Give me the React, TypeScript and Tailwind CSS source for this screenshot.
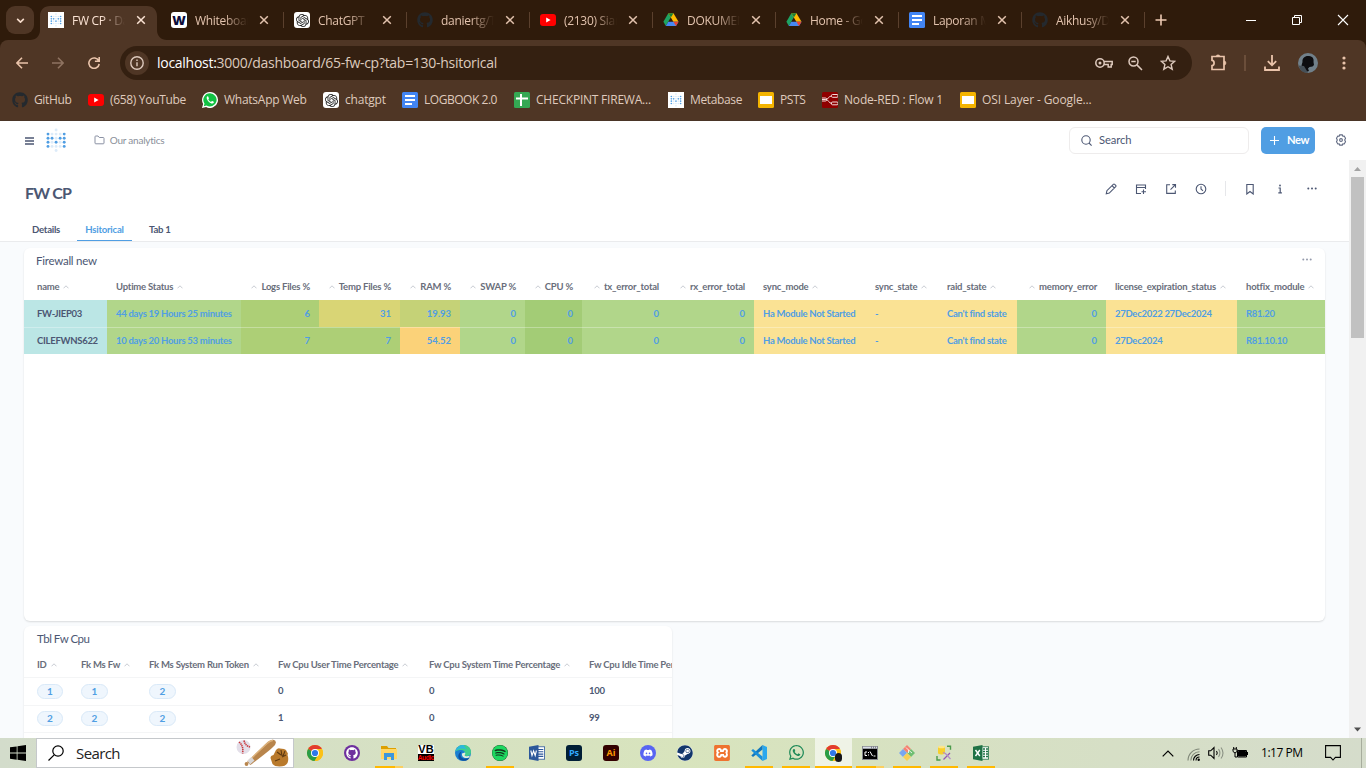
import type { ReactNode } from 'react';
import { FaGithub, FaWhatsapp, FaDiscord, FaSteam, FaSpotify } from 'react-icons/fa';
import { SiOpenai, SiXampp } from 'react-icons/si';

/* ---------- brand marks ---------- */

const METABASE_DARK = new Set(['0-1', '0-2', '0-3', '0-4', '1-2', '2-3', '3-2', '4-1', '4-2', '4-3', '4-4']);

function MetabaseDots({ className }: { className: string }) {
  const dots: ReactNode[] = [];
  for (let c = 0; c < 5; c++) {
    for (let r = 0; r < 6; r++) {
      if ((r === 0 || r === 5) && c !== 2) continue;
      const dark = METABASE_DARK.has(`${c}-${r}`);
      dots.push(<circle key={`${c}-${r}`} cx={2 + c * 4.05} cy={2 + r * 4.1} r={1.45} fill={dark ? '#509ee3' : '#dcebf9'} />);
    }
  }
  return (
    <svg viewBox="0 0 20.3 24.5" className={className}>
      {dots}
    </svg>
  );
}

function MetabaseTile() {
  return (
    <span className="flex size-4 items-center justify-center bg-white">
      <MetabaseDots className="h-[14px] w-3" />
    </span>
  );
}

function OpenAiTile() {
  return (
    <span className="flex size-4 items-center justify-center rounded-[3px] bg-white">
      <SiOpenai className="size-[13px] text-[#222]" />
    </span>
  );
}

function YoutubeTile() {
  return (
    <svg viewBox="0 0 16 16" className="size-4">
      <rect x="0" y="2" width="16" height="12" rx="3" fill="#f00" />
      <path d="M6.2 5.5v5l4.4-2.5z" fill="#fff" />
    </svg>
  );
}

function DriveMark() {
  return (
    <svg viewBox="0 0 16 16" className="size-4">
      <path d="M5.3 1.2 0.4 9.8l2.4 4.2L8 5.1z" fill="#1ea362" />
      <path d="M5.3 1.2h5.2l5 8.6h-5.1z" fill="#ffba00" />
      <path d="M5.3 1.2h5.2L8 5.3z" fill="#188038" />
      <path d="M5.3 9.8h10.2l-2.5 4.2H2.8z" fill="#4688f4" />
      <path d="M10.4 9.8h5.1L13 14z" fill="#ea4335" />
    </svg>
  );
}

function DocsTile() {
  return (
    <svg viewBox="0 0 16 16" className="size-4">
      <rect width="16" height="16" rx="1.5" fill="#4285f4" />
      <path d="M3 4h10M3 8h10M3 12h7" stroke="#fff" strokeWidth="1.8" />
    </svg>
  );
}

function SheetsTile() {
  return (
    <svg viewBox="0 0 16 16" className="size-4">
      <rect width="16" height="16" rx="1.5" fill="#34a853" />
      <path d="M2 6.5h12M7 2v12" stroke="#fff" strokeWidth="2" />
    </svg>
  );
}

function SlidesTile() {
  return (
    <svg viewBox="0 0 16 16" className="size-4">
      <rect width="16" height="16" rx="1.5" fill="#f4b400" />
      <rect x="2" y="4" width="12" height="8" fill="#fff" />
    </svg>
  );
}

function NodeRedTile() {
  return (
    <svg viewBox="0 0 16 16" className="size-4">
      <rect width="16" height="16" rx="1.5" fill="#8f0000" />
      <g fill="none" stroke="#f3dcdc" strokeWidth="1">
        <path d="M0 7.500h3.500C7 7.500 6 4 9.500 4M3.500 7.500C7 7.500 6.500 11.500 10 11.500" />
        <rect x="9.500" y="2.500" width="6.500" height="2.800" rx="1" />
        <rect x="9.500" y="10" width="6.500" height="2.800" rx="1" />
        <rect x="-1" y="6" width="5.500" height="3" rx="1" />
      </g>
    </svg>
  );
}

function WhatsappBadge() {
  return (
    <svg viewBox="0 0 16 16" className="size-4">
      <path d="M8 0a8 8 0 0 0-6.9 12L0 16l4.1-1A8 8 0 1 0 8 0z" fill="#fff" />
      <path d="M8 1.3a6.6 6.6 0 0 0-5.5 10.3l-.7 2.6 2.7-.7A6.6 6.6 0 1 0 8 1.3z" fill="#12c143" />
      <path d="M5.5 4.3c-.8.5-1 1.500-.6 2.600.9 2.200 2.400 3.700 4.600 4.500 1.100.3 2-.1 2.400-1.100.1-.3 0-.5-.2-.6l-1.400-.7c-.3-.1-.5 0-.7.3l-.5.6c-1.300-.5-2.200-1.400-2.800-2.500l.5-.7c.1-.2.1-.4 0-.6l-.6-1.500c-.1-.3-.4-.4-.7-.3z" fill="#fff" />
    </svg>
  );
}

function ChromeMark({ className = 'size-4' }: { className?: string }) {
  return (
    <svg viewBox="0 0 16 16" className={className}>
      <circle cx="8" cy="8" r="8" fill="#fbc116" />
      <path d="M8 8 1.070 4A8 8 0 0 1 14.930 4z" fill="#e33b2e" />
      <path d="M8 8 1.070 4A8 8 0 0 0 7.500 16l3.700-6.200z" fill="#2a9d48" />
      <path d="M8 4h6.930A8 8 0 0 1 8 16l3.460-6z" fill="#fbc116" />
      <circle cx="8" cy="8" r="4" fill="#fff" />
      <circle cx="8" cy="8" r="3.1" fill="#2f78ea" />
    </svg>
  );
}

/* ---------- browser frame ---------- */

const tabs: { icon: ReactNode; title: string }[] = [
  { icon: <MetabaseTile />, title: 'FW CP · Dashboard' },
  {
    icon: (
      <span className="flex size-4 items-center justify-center rounded-[3px] bg-white font-['Noto_Sans',sans-serif] text-[13px] leading-none font-black text-[#0b0b3b]">
        W
      </span>
    ),
    title: 'Whiteboard',
  },
  { icon: <OpenAiTile />, title: 'ChatGPT' },
  { icon: <FaGithub className="size-4 text-[#24292e]" />, title: 'daniertg/Tugas' },
  { icon: <YoutubeTile />, title: '(2130) Siaran' },
  { icon: <DriveMark />, title: 'DOKUMEN' },
  { icon: <DriveMark />, title: 'Home - Google' },
  { icon: <DocsTile />, title: 'Laporan Magang' },
  { icon: <FaGithub className="size-4 text-[#24292e]" />, title: 'Aikhusy/Dash' },
];

function CloseX() {
  return (
    <svg viewBox="0 0 10 10" className="size-[10px] shrink-0" fill="none" stroke="currentColor" strokeWidth="1.5">
      <path d="M1.2 1.2l7.600 7.600M8.800 1.200l-7.600 7.600" />
    </svg>
  );
}

function TabStrip() {
  return (
    <div className="flex h-10 bg-[#2f1b0b]">
      <div className="flex w-10 shrink-0 pt-1.5 pl-1.5">
        <span className="flex size-7 items-center justify-center rounded-[9px] bg-[#4f3625] text-[#f6dccb]">
          <svg viewBox="0 0 10 6" className="h-[5px] w-[9px]" fill="none" stroke="currentColor" strokeWidth="1.900">
            <path d="M1 1l4 4 4-4" />
          </svg>
        </span>
      </div>
      {tabs.map((t, i) => (
        <div key={t.title} className="relative flex w-[123px] shrink-0 pt-1.5">
          {i === 0 && (
            <svg viewBox="0 0 137 34" className="absolute top-1.5 -left-[10px] h-[34px] w-[137px]">
              <path d="M0 34c6 0 10-4 10-10V10C10 4 14 0 20 0h97c6 0 10 4 10 10v14c0 6 4 10 10 10z" fill="#4f3625" />
            </svg>
          )}
          <div className={`relative flex h-7 w-[117px] items-center pl-2 ${i === 0 ? 'text-[#fbe3d4]' : 'text-[#e3c3ae]'}`}>
            {t.icon}
            <span className="ml-2 w-[53px] overflow-hidden mask-r-from-55% mask-r-to-100% pt-px font-['Open_Sans',sans-serif] text-[12px] tracking-[-0.3px] whitespace-nowrap">
              {t.title}
            </span>
            <span className="ml-[11px] flex">
              <CloseX />
            </span>
          </div>
          {i > 0 && <span className="mt-1.5 ml-[3px] h-4 w-px bg-[#5b402d]" />}
        </div>
      ))}
      <div className="flex w-[60px] items-center pl-2 text-[#eecab3]">
        <svg viewBox="0 0 12 12" className="size-3" stroke="currentColor" strokeWidth="1.6">
          <path d="M6 0.500v11M0.500 6h11" />
        </svg>
      </div>
      <div className="ml-auto flex items-center text-white">
        <svg viewBox="0 0 46 40" className="h-10 w-[46px]" stroke="currentColor">
          <path d="M18 20.500h10" />
        </svg>
        <svg viewBox="0 0 46 40" className="h-10 w-[46px]" fill="none" stroke="currentColor">
          <path d="M18.500 17.500h7v7h-7zM20.500 17.500v-2h7v7h-2" />
        </svg>
        <svg viewBox="0 0 46 40" className="h-10 w-[46px]" fill="none" stroke="currentColor" strokeWidth="1.1">
          <path d="M18 15l10 10M28 15l-10 10" />
        </svg>
      </div>
    </div>
  );
}

function Toolbar() {
  return (
    <div className="flex h-[46px] items-center">
      <div className="flex w-[120px] shrink-0 items-center pl-4 text-[#eac4ab]">
        <svg viewBox="0 0 12 12" className="size-3" fill="none" stroke="currentColor" strokeWidth="1.6">
          <path d="M12 6H1M6 0.800 0.900 6 6 11.200" />
        </svg>
        <svg viewBox="0 0 12 12" className="ml-6 size-3 text-[#8f7361]" fill="none" stroke="currentColor" strokeWidth="1.6">
          <path d="M0 6h11M6 0.800 11.100 6 6 11.200" />
        </svg>
        <svg viewBox="0 0 12 12" className="ml-6 size-3" fill="none" stroke="currentColor" strokeWidth="1.6">
          <path d="M10.700 3.800A5.200 5.200 0 1 0 11.200 7M11.200 0v4.300H6.900" />
        </svg>
      </div>
      <div className="flex h-[34px] w-[1072px] shrink-0 items-center rounded-full bg-[#342011] pl-[5px] text-[#ddc9bd]">
        <span className="flex size-6 items-center justify-center rounded-full bg-[#4f3625]">
          <svg viewBox="0 0 14 14" className="size-[14px]" fill="none" stroke="currentColor" strokeWidth="1.400">
            <circle cx="7" cy="7" r="6.200" />
            <path d="M7 6.200v4M7 3.500v1.400" />
          </svg>
        </span>
        <span className="ml-2 pb-px font-['Open_Sans',sans-serif] text-[14px] tracking-[-0.28px] whitespace-nowrap text-[#ddcabd]">
          <span className="text-white">localhost:</span>3000/dashboard/65-fw-cp?tab=130-hsitorical
        </span>
        <svg viewBox="0 0 18 12" className="ml-auto h-3 w-[18px]" fill="none" stroke="currentColor" strokeWidth="1.500">
          <circle cx="5" cy="6" r="4.200" />
          <circle cx="5" cy="6" r="1.500" fill="currentColor" stroke="none" />
          <path d="M9 4.500h8.200v3h-1v2.500h-3V7.500H9" />
        </svg>
        <svg viewBox="0 0 15 15" className="ml-[15px] size-[15px]" fill="none" stroke="currentColor" strokeWidth="1.500">
          <circle cx="5.500" cy="5.500" r="4.500" />
          <path d="M8.900 8.900 14 14M3.300 5.500h4.400" />
        </svg>
        <svg viewBox="0 0 16 16" className="mr-4 ml-[17px] size-4" fill="none" stroke="currentColor" strokeWidth="1.400">
          <path d="M8 1.500l1.900 4.400 4.800.4-3.600 3.200 1.100 4.700L8 11.700l-4.200 2.500 1.100-4.700L1.300 6.300l4.800-.4z" />
        </svg>
      </div>
      <div className="flex flex-1 items-center pl-[18px] text-[#eac4ab]">
        <svg viewBox="0 0 18 18" className="size-[18px]" fill="none" stroke="currentColor" strokeWidth="1.700">
          <path d="M2 2.500h12v13H2v-3.800c2.800-.2 2.800-5.200 0-5.400z" />
          <path d="M6 2.500a2 1.700 0 0 1 4 0zM14 7a2 2 0 0 1 0 4z" fill="currentColor" strokeWidth="0.500" />
        </svg>
        <span className="ml-4 h-4 w-[2px] bg-[#6b4e3a]" />
        <svg viewBox="0 0 16 16" className="ml-[18px] size-4" fill="none" stroke="currentColor" strokeWidth="1.800">
          <path d="M8 0v10M3.800 6.200 8 10.300l4.200-4.100M1 11.500V15h14v-3.500" />
        </svg>
        <svg viewBox="0 0 20 20" className="ml-[18px] size-5">
          <circle cx="10" cy="10" r="10" fill="#71808a" />
          <path d="M4.500 9c-.5-4 2.500-6.500 6.500-6s5 3 4.500 6l.5 3-1.500 1.500-3 .5-1.500 1.500 1 2.500-3 1-4.500-6.500z" fill="#0d0d10" />
          <path d="M0.800 12.500 6 13l4 6.800C5 20.300 1.500 17 .8 12.500z" fill="#465058" />
        </svg>
        <svg viewBox="0 0 4 14" className="ml-6 h-[14px] w-1" fill="currentColor">
          <circle cx="2" cy="2" r="1.600" />
          <circle cx="2" cy="7" r="1.600" />
          <circle cx="2" cy="12" r="1.600" />
        </svg>
      </div>
    </div>
  );
}

const bookmarks: { icon: ReactNode; label: string; width: string; tracking: string }[] = [
  { icon: <FaGithub className="size-4 text-[#24292e]" />, label: 'GitHub', width: 'w-[76px]', tracking: 'tracking-[-0.36px]' },
  { icon: <YoutubeTile />, label: '(658) YouTube', width: 'w-[114px]', tracking: 'tracking-[-0.32px]' },
  { icon: <WhatsappBadge />, label: 'WhatsApp Web', width: 'w-[121px]', tracking: 'tracking-[-0.26px]' },
  { icon: <OpenAiTile />, label: 'chatgpt', width: 'w-[79px]', tracking: 'tracking-[-0.2px]' },
  { icon: <DocsTile />, label: 'LOGBOOK 2.0', width: 'w-[112px]', tracking: 'tracking-[-0.46px]' },
  { icon: <SheetsTile />, label: 'CHECKPINT FIREWA...', width: 'w-[154px]', tracking: 'tracking-[-0.22px]' },
  { icon: <MetabaseTile />, label: 'Metabase', width: 'w-[90px]', tracking: 'tracking-[-0.36px]' },
  { icon: <SlidesTile />, label: 'PSTS', width: 'w-16', tracking: 'tracking-[-0.36px]' },
  { icon: <NodeRedTile />, label: 'Node-RED : Flow 1', width: 'w-[138px]', tracking: 'tracking-[-0.18px]' },
  { icon: <SlidesTile />, label: 'OSI Layer - Google...', width: 'w-[150px]', tracking: 'tracking-[-0.11px]' },
];

function BookmarkBar() {
  return (
    <div className="flex h-[35px] items-center border-b border-[#4a3527] pb-[6px] pl-3">
      {bookmarks.map((b) => (
        <div key={b.label} className={`flex shrink-0 items-center gap-1.5 ${b.width}`}>
          {b.icon}
          <span className={`font-['Open_Sans',sans-serif] text-[12px] whitespace-nowrap text-[#dfcabd] ${b.tracking}`}>{b.label}</span>
        </div>
      ))}
    </div>
  );
}

/* ---------- dashboard ---------- */

function Caret() {
  return (
    <svg viewBox="0 0 6 4" className="mb-px h-1 w-1.5 shrink-0 text-[#b9bec6]" fill="none" stroke="currentColor" strokeWidth="0.800">
      <path d="M0.500 3.300 3 0.800l2.500 2.500" />
    </svg>
  );
}

function Dots({ className }: { className: string }) {
  return (
    <svg viewBox="0 0 10 3" className={className} fill="currentColor">
      <circle cx="1.300" cy="1.500" r="1" />
      <circle cx="5" cy="1.500" r="1" />
      <circle cx="8.700" cy="1.500" r="1" />
    </svg>
  );
}

function AppHeader() {
  return (
    <div className="flex h-[39px] shrink-0 items-center bg-white">
      <svg viewBox="0 0 9 8" className="ml-[25px] h-2 w-[9px] text-[#4c5773]" stroke="currentColor" strokeWidth="1.300">
        <path d="M0 1h9M0 4h9M0 7h9" />
      </svg>
      <MetabaseDots className="ml-3 h-[24.500px] w-[20.300px]" />
      <svg viewBox="0 0 11 10" className="mb-px ml-7 h-[10px] w-[11px] text-[#8a91a3]" fill="none" stroke="currentColor" strokeWidth="1">
        <path d="M1 8V1.800q0-.8.8-.8h2.200l1.300 1.500h3.900q.8 0 .8.800V8q0 .8-.8.800H1.800Q1 8.800 1 8z" />
      </svg>
      <span className="ml-[4.500px] text-[10px] tracking-[-0.23px] text-[#8a8f99]">Our analytics</span>
      <div className="ml-auto flex h-[27px] w-[180px] items-center rounded-md border border-[#eeecec] pl-[11px]">
        <svg viewBox="0 0 11 11" className="size-[11px] text-[#4c5773]" fill="none" stroke="currentColor" strokeWidth="1.100">
          <circle cx="5" cy="5" r="4.200" />
          <path d="M8 8l2.600 2.600" />
        </svg>
        <span className="ml-[7px] text-[11.200px] tracking-[-0.1px] text-[#4c5773]">Search</span>
      </div>
      <div className="ml-3 flex h-[27px] w-[54px] items-center rounded-[5px] bg-[#509ee3] text-white">
        <svg viewBox="0 0 9 9" className="ml-[9px] size-[9px]" stroke="currentColor" strokeWidth="1.100">
          <path d="M4.500 0v9M0 4.500h9" />
        </svg>
        <span className="ml-2 text-[11.200px] font-bold tracking-[-0.4px]">New</span>
      </div>
      <svg viewBox="0 0 12 12" className="mr-[19px] mb-px ml-5 size-3 text-[#5f6880]" fill="none" stroke="currentColor" strokeWidth="1.100">
        <path d="M4.700 0.900h2.600l.5 1.300 1.400-.2 1.300 2.200L9.700 6l.8 1.800-1.300 2.200-1.400-.2-.5 1.300H4.700l-.5-1.300-1.400.2-1.300-2.200L2.300 6l-.8-1.800L2.800 2l1.400.2z" />
        <circle cx="6" cy="6" r="1.400" />
      </svg>
    </div>
  );
}

function DashActions() {
  return (
    <div className="flex items-center text-[#4c5773]">
      <svg viewBox="0 0 12 12" className="size-3" fill="none" stroke="currentColor" strokeWidth="1.100">
        <path d="M1.300 10.700l.6-3L8.300 1.300q.7-.6 1.400 0l1 1q.6.7 0 1.400L4.300 10.100zM7 2.600 9.400 5" />
      </svg>
      <svg viewBox="0 0 12 12" className="ml-[18px] size-3" fill="none" stroke="currentColor" strokeWidth="1.100">
        <path d="M6 10.500H1.500v-8.500h9v4M1 4.500h10M8.500 6.500v4.500M6.500 8.800h4.500" />
      </svg>
      <svg viewBox="0 0 12 12" className="ml-[18px] size-3" fill="none" stroke="currentColor" strokeWidth="1.100">
        <path d="M5 1.800H1.700v8.600h8.600V7.500M7.300 1.600h3.200v3.200M10.500 1.600 5.500 6.600" />
      </svg>
      <svg viewBox="0 0 12 12" className="ml-[18px] size-3" fill="none" stroke="currentColor" strokeWidth="1.100">
        <circle cx="6" cy="6" r="4.800" />
        <path d="M6 3.200V6l2 1.800" />
      </svg>
      <span className="ml-[18px] h-[15px] w-px bg-[#e6e7ea]" />
      <svg viewBox="0 0 12 12" className="ml-[18px] size-3" fill="none" stroke="currentColor" strokeWidth="1.100">
        <path d="M2.800 1.500h6.400V11L6 8.500 2.800 11z" />
      </svg>
      <svg viewBox="0 0 12 12" className="ml-[18px] size-3" fill="none" stroke="currentColor" strokeWidth="1.200">
        <path d="M4.500 5h1.700v4.500M4.300 9.800h3.600" />
        <circle cx="6" cy="2.500" r="0.900" fill="currentColor" stroke="none" />
      </svg>
      <Dots className="ml-[21px] h-[3px] w-[10px]" />
    </div>
  );
}

const GREEN = 'bg-[#b1d68a]';
const YELLOW = 'bg-[#fae294]';
const MOSS = 'bg-[#adcf76]';

interface Column {
  name: string;
  width: string;
  right?: boolean;
  cells: [string, string];
  fills: [string, string];
}

const columns: Column[] = [
  { name: 'name', width: 'w-[83px]', cells: ['FW-JIEP03', 'CILEFWNS622'], fills: ['bg-[#bbe6e5]', 'bg-[#bbe6e5]'] },
  { name: 'Uptime Status', width: 'w-[134px]', cells: ['44 days 19 Hours 25 minutes', '10 days 20 Hours 53 minutes'], fills: [GREEN, GREEN] },
  { name: 'Logs Files %', width: 'w-[78px]', right: true, cells: ['6', '7'], fills: [MOSS, MOSS] },
  { name: 'Temp Files %', width: 'w-[81px]', right: true, cells: ['31', '7'], fills: ['bg-[#d9d575]', MOSS] },
  { name: 'RAM %', width: 'w-[60px]', right: true, cells: ['19.93', '54.52'], fills: ['bg-[#c5d277]', 'bg-[#fbd279]'] },
  { name: 'SWAP %', width: 'w-[65px]', right: true, cells: ['0', '0'], fills: [GREEN, GREEN] },
  { name: 'CPU %', width: 'w-[57px]', right: true, cells: ['0', '0'], fills: ['bg-[#a3cc76]', 'bg-[#a3cc76]'] },
  { name: 'tx_error_total', width: 'w-[86px]', right: true, cells: ['0', '0'], fills: [GREEN, GREEN] },
  { name: 'rx_error_total', width: 'w-[86px]', right: true, cells: ['0', '0'], fills: [GREEN, GREEN] },
  { name: 'sync_mode', width: 'w-[112px]', cells: ['Ha Module Not Started', 'Ha Module Not Started'], fills: [YELLOW, YELLOW] },
  { name: 'sync_state', width: 'w-[72px]', cells: ['-', '-'], fills: [YELLOW, YELLOW] },
  { name: 'raid_state', width: 'w-[79px]', cells: ["Can't find state", "Can't find state"], fills: [YELLOW, YELLOW] },
  { name: 'memory_error', width: 'w-[89px]', right: true, cells: ['0', '0'], fills: [GREEN, GREEN] },
  { name: 'license_expiration_status', width: 'w-[131px]', cells: ['27Dec2022 27Dec2024', '27Dec2024'], fills: [YELLOW, YELLOW] },
  { name: 'hotfix_module', width: 'w-[88px]', cells: ['R81.20', 'R81.10.10'], fills: [GREEN, GREEN] },
];

function FirewallCard() {
  return (
    <section className="h-[373px] w-[1301px] shrink-0 overflow-hidden rounded-md bg-white shadow-[0_1px_2px_rgba(0,0,0,0.13)]">
      <div className="flex h-[26px] items-center justify-between pr-[13px] pl-3">
        <h2 className="text-[11.500px] font-normal tracking-[-0.25px] text-[#4c5773]">Firewall new</h2>
        <Dots className="mb-[3px] h-[3px] w-[10px] text-[#949aab]" />
      </div>
      <div className="flex h-[26px] items-center">
        {columns.map((c, i) => (
          <div
            key={c.name}
            className={`flex shrink-0 items-center gap-1 text-[9.500px] font-bold tracking-[-0.21px] whitespace-nowrap text-[#696e7b] ${c.width} ${
              i === 0 ? 'pl-[13px]' : 'px-[9px]'
            } ${c.right ? 'flex-row-reverse' : ''}`}
          >
            <span>{c.name}</span>
            <Caret />
          </div>
        ))}
      </div>
      {([0, 1] as const).map((r) => (
        <div key={r} className="flex h-[27px]">
          {columns.map((c, i) => (
            <div
              key={c.name}
              className={`flex shrink-0 items-center text-[9.500px] font-bold whitespace-nowrap ${c.width} ${c.fills[r]} ${
                i === 0 ? 'pl-[13px] text-[#4c5773]' : 'px-[9px] text-[#509ee3]'
              } ${c.right ? 'justify-end' : 'tracking-[-0.28px]'} ${r === 1 ? 'border-t border-white/30' : 'pt-px'}`}
            >
              {c.cells[r]}
            </div>
          ))}
        </div>
      ))}
    </section>
  );
}

const cpuColumns = [
  { name: 'ID', width: 'w-[44px]', cells: ['1', '2'], pill: 'w-[26px]' },
  { name: 'Fk Ms Fw', width: 'w-[68px]', cells: ['1', '2'], pill: 'w-[27px]' },
  { name: 'Fk Ms System Run Token', width: 'w-[129px]', cells: ['2', '2'], pill: 'w-[27px]' },
  { name: 'Fw Cpu User Time Percentage', width: 'w-[151px]', cells: ['0', '1'], pill: '' },
  { name: 'Fw Cpu System Time Percentage', width: 'w-[160px]', cells: ['0', '0'], pill: '' },
  { name: 'Fw Cpu Idle Time Percentage', width: 'w-[160px]', cells: ['100', '99'], pill: '' },
];

function CpuCard() {
  return (
    <section className="mt-[5px] h-[180px] w-[648px] shrink-0 overflow-hidden rounded-md bg-white shadow-[0_1px_2px_rgba(0,0,0,0.13)]">
      <div className="flex h-[26px] items-center pl-[13px]">
        <h2 className="text-[11.500px] font-normal tracking-[-0.5px] text-[#4c5773]">Tbl Fw Cpu</h2>
      </div>
      <div className="flex h-[26px] items-center border-b border-[#f4f5f6] pt-0.5 pl-[13px]">
        {cpuColumns.map((c) => (
          <div key={c.name} className={`flex shrink-0 items-center gap-1 text-[9.500px] font-bold tracking-[-0.23px] whitespace-nowrap text-[#696e7b] ${c.width}`}>
            <span>{c.name}</span>
            <Caret />
          </div>
        ))}
      </div>
      {[0, 1].map((r) => (
        <div key={r} className={`flex items-center border-b border-[#f4f5f6] pl-[13px] ${r === 0 ? 'h-7' : 'h-[27px] pb-px'}`}>
          {cpuColumns.map((c) => (
            <div key={c.name} className={`flex shrink-0 ${c.width}`}>
              {c.pill ? (
                <span className={`flex h-[15px] items-center justify-center rounded-full border border-[#d9e9f8] bg-[#eff6fd] text-[10px] font-bold text-[#509ee3] ${c.pill}`}>
                  {c.cells[r]}
                </span>
              ) : (
                <span className="text-[9.500px] font-bold tracking-[-0.2px] text-[#4c5773]">{c.cells[r]}</span>
              )}
            </div>
          ))}
        </div>
      ))}
    </section>
  );
}

function Dashboard() {
  return (
    <div className="flex min-h-0 flex-1 flex-col bg-white font-['Lato',sans-serif]">
      <AppHeader />
      <div className="flex min-h-0 flex-1">
        <div className="flex min-w-0 flex-1 flex-col overflow-hidden bg-[#f9fbfd]">
          <div className="flex h-[82px] shrink-0 flex-col border-b border-[#eaebed] bg-white">
            <div className="flex h-[58px] shrink-0 items-start justify-between pr-8 pl-[25px]">
              <h1 className="mt-[21px] text-[16px] leading-6 font-bold tracking-[-0.8px] text-[#4c5773]">FW CP</h1>
              <div className="mt-[21px]">
                <DashActions />
              </div>
            </div>
            <div className="flex h-[23px] text-[9.600px] font-bold tracking-[-0.25px]">
              <span className="ml-6 w-[53px] pl-2 leading-[23px] text-[#4c5773]">Details</span>
              <span className="flex h-[23px] w-[55px] justify-center border-b border-[#509ee3] leading-[23px] text-[#509ee3]">Hsitorical</span>
              <span className="ml-[17px] leading-[23px] text-[#4c5773]">Tab 1</span>
            </div>
          </div>
          <div className="flex min-h-0 flex-1 flex-col pt-1.5 pl-6">
            <FirewallCard />
            <CpuCard />
          </div>
        </div>
        <div className="flex w-[17px] shrink-0 flex-col items-center bg-[#f1f1f1]">
          <svg viewBox="0 0 17 17" className="size-[17px]" fill="#a3a3a3">
            <path d="M5 11l3.500-4 3.500 4z" />
          </svg>
          <span className="h-[161px] w-[13px] bg-[#c1c1c1]" />
          <svg viewBox="0 0 17 17" className="mt-auto size-[17px]" fill="#505050">
            <path d="M5 6.500l3.500 4 3.500-4z" />
          </svg>
        </div>
      </div>
    </div>
  );
}

/* ---------- taskbar ---------- */

function SquareMark({ bg, color, label }: { bg: string; color: string; label: string }) {
  return (
    <span className={`flex size-4 items-center justify-center rounded-[3px] font-['Open_Sans',sans-serif] text-[9px] font-bold ${bg} ${color}`}>{label}</span>
  );
}

type Running = 'none' | 'single' | 'stack' | 'active';

const taskbarApps: { id: string; icon: ReactNode; state: Running }[] = [
  { id: 'chrome', state: 'none', icon: <ChromeMark /> },
  {
    id: 'github-desktop',
    state: 'none',
    icon: (
      <span className="flex size-4 items-center justify-center rounded-full bg-[#6e2f9e]">
        <FaGithub className="size-3 text-white" />
      </span>
    ),
  },
  {
    id: 'explorer',
    state: 'stack',
    icon: (
      <svg viewBox="0 0 16 16" className="size-4">
        <path d="M0 1h6l1.500 2H15v4H0z" fill="#dda000" />
        <path d="M0 4h16v10H0z" fill="#ffd766" />
        <path d="M3 8h10v7h-3v-3H6v3H3z" fill="#3c97dd" />
      </svg>
    ),
  },
  {
    id: 'vb-audio',
    state: 'none',
    icon: (
      <span className="flex size-4 flex-col items-center overflow-hidden bg-white font-['Liberation_Sans',sans-serif]">
        <span className="text-[11px] leading-[9px] font-bold text-black">VB</span>
        <span className="flex h-[7px] w-4 justify-center bg-black text-[6.500px] leading-[7px] font-bold tracking-[-0.4px] text-[#f00]">Audio</span>
      </span>
    ),
  },
  {
    id: 'edge',
    state: 'none',
    icon: (
      <svg viewBox="0 0 16 16" className="size-4">
        <circle cx="8" cy="8" r="8" fill="#1b7fd1" />
        <path d="M0.300 6.500C1.500 2 5 0 8.500 0 13 0 16 3.300 16 7c0 2.500-2 4-4 4-1.700 0-2.600-.7-2.300-1.300C11 7.300 9 5 6 5c-2.500 0-4.500.5-5.700 1.500z" fill="#3fcf8b" />
        <path d="M0.300 6.500C1.500 2 5 0 8.500 0L12 5C7 2 3 4 .3 6.500z" fill="#2bb8dd" />
        <path d="M5.500 9c-.5 4 3 6 9 4-2 3-6 3.500-9 2C2 13 3 8 6.500 6.500z" fill="#0d4f9e" />
        <path d="M10 7.500c1 2-1 2.200 0 3.300 1.200.9 3.500.4 5 0l-1.500 2C9 14 6.500 11.500 7 8.500z" fill="#e3efd8" />
      </svg>
    ),
  },
  {
    id: 'spotify',
    state: 'single',
    icon: (
      <span className="flex size-4 rounded-full bg-[#12351d]">
        <FaSpotify className="size-4 text-[#1ed760]" />
      </span>
    ),
  },
  {
    id: 'word',
    state: 'none',
    icon: (
      <svg viewBox="0 0 16 16" className="size-4">
        <rect x="8" y="1.800" width="7.600" height="12.400" fill="#fff" stroke="#2b579a" strokeWidth="0.800" />
        <path d="M9 4.500h5.300M9 6.800h5.300M9 9.100h5.300M9 11.400h5.300" stroke="#2b579a" strokeWidth="1.100" />
        <path d="M0 1.800 9.500 0v16L0 14.200z" fill="#2b579a" />
        <path d="M1.800 5.500 3 10.500 4.600 6 6.200 10.500 7.400 5.500" fill="none" stroke="#fff" strokeWidth="1.100" />
      </svg>
    ),
  },
  { id: 'photoshop', state: 'none', icon: <SquareMark bg="bg-[#001e36]" color="text-[#31a8ff]" label="Ps" /> },
  { id: 'illustrator', state: 'none', icon: <SquareMark bg="bg-[#330000]" color="text-[#ff9a00]" label="Ai" /> },
  {
    id: 'discord',
    state: 'none',
    icon: (
      <span className="flex size-4 items-center justify-center rounded-full bg-[#5865f2]">
        <FaDiscord className="size-[10px] text-white" />
      </span>
    ),
  },
  {
    id: 'steam',
    state: 'none',
    icon: (
      <span className="flex size-4 rounded-full bg-white">
        <FaSteam className="size-4 text-[#12366b]" />
      </span>
    ),
  },
  {
    id: 'xampp',
    state: 'none',
    icon: (
      <span className="flex size-4 items-center justify-center rounded-[3px] bg-white">
        <SiXampp className="size-4 text-[#ee7330]" />
      </span>
    ),
  },
  {
    id: 'vscode',
    state: 'single',
    icon: (
      <svg viewBox="0 0 16 16" className="size-4">
        <path d="M11.500 0 16 2v12l-4.500 2z" fill="#29a8ee" />
        <path d="M11.500 0v4.500L2 12 .3 10.500z" fill="#1277bd" />
        <path d="M11.500 16v-4.500L2 4 .3 5.500z" fill="#1a8fda" />
      </svg>
    ),
  },
  { id: 'whatsapp', state: 'single', icon: <FaWhatsapp className="size-[17px] text-[#1f8a58]" /> },
  {
    id: 'chrome-profile',
    state: 'active',
    icon: (
      <span className="relative flex size-4">
        <ChromeMark />
        <span className="absolute -right-px -bottom-px h-[9px] w-[7px] rounded-full bg-[#16161a]" />
      </span>
    ),
  },
  {
    id: 'terminal',
    state: 'stack',
    icon: (
      <svg viewBox="0 0 16 14" className="h-[14px] w-4">
        <rect width="16" height="14" fill="#87898f" />
        <rect x="1" y="3" width="14" height="10" fill="#000" />
        <path d="M1 1.500h8M10 1.500h1M12 1.500h1M14 1.500h1" stroke="#d8dde8" strokeWidth="1.400" />
        <path d="M5 6H3v3.500h2M6.500 6v1M6.500 8.500v1M8 5.500l2.500 4.500M11.500 10h2" fill="none" stroke="#fff" strokeWidth="1" />
      </svg>
    ),
  },
  {
    id: 'git-tools',
    state: 'single',
    icon: (
      <svg viewBox="0 0 16 16" className="size-4">
        <path d="M8 0l4 4-4 4-4-4z" fill="#f58272" />
        <path d="M4 4l4 4-4 4-4-4z" fill="#79a6f0" />
        <path d="M12 4l4 4-4 4-4-4z" fill="#6fbf72" />
        <path d="M8 8l4 4-4 4-4-4z" fill="#f8cf55" />
        <path d="M7 2.500l2.500 2.500v3M9.500 5l3.500 3" fill="none" stroke="#fff" strokeWidth="0.800" />
      </svg>
    ),
  },
  {
    id: 'db-tools',
    state: 'single',
    icon: (
      <svg viewBox="0 0 16 16" className="size-4">
        <path d="M2 2q3.500-2 7 0v6.500q-3.500 2-7 0z" fill="#f7cf2c" />
        <ellipse cx="5.500" cy="2" rx="3.500" ry="1.300" fill="#fde58a" />
        <path d="M11 1.200h3.500v3.500M1 11v4h3.500" fill="none" stroke="#4a9a4a" strokeWidth="1.400" />
        <path d="M7.500 14.500 14 8" stroke="#9357b3" strokeWidth="1.200" />
        <path d="M7 7.500 9.500 8.500 14.500 14" fill="none" stroke="#b48acb" strokeWidth="1.200" />
      </svg>
    ),
  },
  {
    id: 'excel',
    state: 'single',
    icon: (
      <svg viewBox="0 0 16 16" className="size-4">
        <rect x="8" y="1.800" width="7.600" height="12.400" fill="#fff" stroke="#1f7246" strokeWidth="0.800" />
        <path d="M10 4h2M13 4h2M10 6.500h2M13 6.500h2M10 9h2M13 9h2M10 11.500h2M13 11.500h2" stroke="#1f7246" strokeWidth="1.300" />
        <path d="M0 1.800 9.500 0v16L0 14.200z" fill="#1f7246" />
        <path d="M2.500 5 6.800 11M6.800 5 2.500 11" stroke="#fff" strokeWidth="1.400" />
      </svg>
    ),
  },
];

function TaskbarApp({ icon, state }: { icon: ReactNode; state: Running }) {
  return (
    <div className={`flex h-[30px] w-[37px] shrink-0 flex-col items-center ${state === 'active' ? 'bg-white/60' : ''}`}>
      <span className="flex h-7 items-center pt-px">{icon}</span>
      {state === 'active' && <span className="h-0.5 w-full bg-[#ffb900]" />}
      {state === 'single' && <span className="h-0.5 w-7 bg-[#ffb900]" />}
      {state === 'stack' && (
        <span className="flex h-0.5 w-7 bg-[#fbcf5e]">
          <span className="w-5 bg-[#ffb900]" />
        </span>
      )}
    </div>
  );
}

function BaseballArt() {
  return (
    <svg viewBox="0 0 56 28" className="h-7 w-14">
      <circle cx="8.500" cy="8" r="7" fill="#e3dfe9" />
      <path d="M4 3q5 4 3.500 11.500M9 1.500q1 5 6 6.500" fill="none" stroke="#c9383c" strokeWidth="1.600" strokeDasharray="1.400 0.600" />
      <path d="M12 23 31 4.500Q36 0 39 1t1 5Q38 9 15.500 26z" fill="#b8854c" />
      <path d="M13 22.500 32 4.500q4-3.500 6-3" fill="none" stroke="#dcb27c" strokeWidth="1.400" />
      <path d="M12.500 21.500l4-3.500 3 3.500-4.500 4z" fill="#d8d6d6" />
      <circle cx="11.500" cy="25" r="1.900" fill="#b8854c" />
      <path d="M35.500 19q0-2.500 3-3L41 11q2-2.500 4-1.500l4 .5q2.500.5 3 3 1.500 1.500.5 3 1.500 4 0 8-2 3.500-8 3.500-5 0-7-2.500z" fill="#b97a2c" />
      <path d="M42 13l4 3M46 11l1 6M50 12l-2 5M40 22l5-2M51 16l-4 2" stroke="#5f3a10" strokeWidth="1.100" />
    </svg>
  );
}

function Taskbar() {
  return (
    <div className="flex h-[30px] shrink-0 items-center bg-linear-to-r from-[#d3dccb] via-[#d8e4bd] to-[#d5dccb] font-['Open_Sans',sans-serif]">
      <div className="flex w-9 shrink-0 items-center justify-center">
        <svg viewBox="0 0 16 16" className="size-4" fill="#000">
          <path d="M0 2.300 6.700 1.400v6.200H0zM7.500 1.200 16 0v7.600H7.500zM0 8.400h6.700v6.300L0 13.700zM7.500 8.400H16V16l-8.500-1.200z" />
        </svg>
      </div>
      <div className="flex h-[30px] w-[258px] shrink-0 items-center border border-[#c5c8cb] bg-white pl-[11px]">
        <svg viewBox="0 0 16 16" className="size-4" fill="none" stroke="#000" strokeWidth="1.200">
          <circle cx="10" cy="6" r="5.200" />
          <path d="M6.200 9.800 0.500 15.500" />
        </svg>
        <span className="ml-3 text-[15px] tracking-[-0.600px] text-[#222]">Search</span>
        <span className="mr-0.5 ml-auto">
          <BaseballArt />
        </span>
      </div>
      <div className="ml-[2.500px] flex">
        {taskbarApps.map((a) => (
          <TaskbarApp key={a.id} icon={a.icon} state={a.state} />
        ))}
      </div>
      <div className="ml-auto flex h-full items-center">
        <svg viewBox="0 0 12 7" className="ml-px h-[7px] w-3" fill="none" stroke="#000" strokeWidth="1.200">
          <path d="M0.700 6.300 6 1l5.300 5.300" />
        </svg>
        <svg viewBox="0 0 13 13" className="mt-0.5 ml-[13px] size-[13px]" fill="none" stroke="#000" strokeWidth="1.100">
          <path d="M1 12.500A11.500 11.500 0 0 1 12.500 1M3.800 12.500a8.700 8.700 0 0 1 8.700-8.700" stroke="#7f8778" />
          <path d="M6.500 12.500a6 6 0 0 1 6-6M9 12.500A3.500 3.500 0 0 1 12.500 9" />
          <circle cx="11.700" cy="11.700" r="1.200" fill="#000" stroke="none" />
        </svg>
        <svg viewBox="0 0 17 14" className="ml-2 h-[14px] w-[17px]" fill="none" stroke="#000" strokeWidth="1.100">
          <path d="M0.700 4.800h2L6 1.500v11L2.700 9.200h-2zM8.500 5q1.500 2 0 4" />
          <path d="M10.500 3.200q2.800 3.800 0 7.600M13 1.500q4 5.500 0 11" stroke="#8b9284" />
        </svg>
        <svg viewBox="0 0 16 12" className="ml-[7px] h-3 w-4" fill="none" stroke="#000" strokeWidth="1">
          <path d="M5.500 3.500h9v6.500h-9zM15.500 5v3" />
          <path d="M6.500 4.500h7V9h-7z" fill="#000" />
          <path d="M1 2h4v2.500L3 6 1 4.500zM1.700 0v2M4.300 0v2M3 6v4h2" />
        </svg>
        <span className="ml-[13px] w-[52px] text-[12px] tracking-[-0.480px] whitespace-nowrap text-black">1:17 PM</span>
        <svg viewBox="0 0 16 16" className="ml-3 size-4" fill="none" stroke="#000" strokeWidth="1.100">
          <path d="M0.600 0.600h14.800v11.800h-5L8 15l-2.400-2.600h-5z" />
        </svg>
        <span className="mr-1 ml-5 h-full w-px bg-[#a7ad9d]" />
      </div>
    </div>
  );
}

export default function App() {
  return (
    <div className="flex h-[768px] w-[1366px] flex-col overflow-hidden bg-[#2f1b0b]">
      <TabStrip />
      <div className="shrink-0 rounded-t-[8px] bg-[#4f3625]">
        <Toolbar />
        <BookmarkBar />
      </div>
      <Dashboard />
      <Taskbar />
    </div>
  );
}
